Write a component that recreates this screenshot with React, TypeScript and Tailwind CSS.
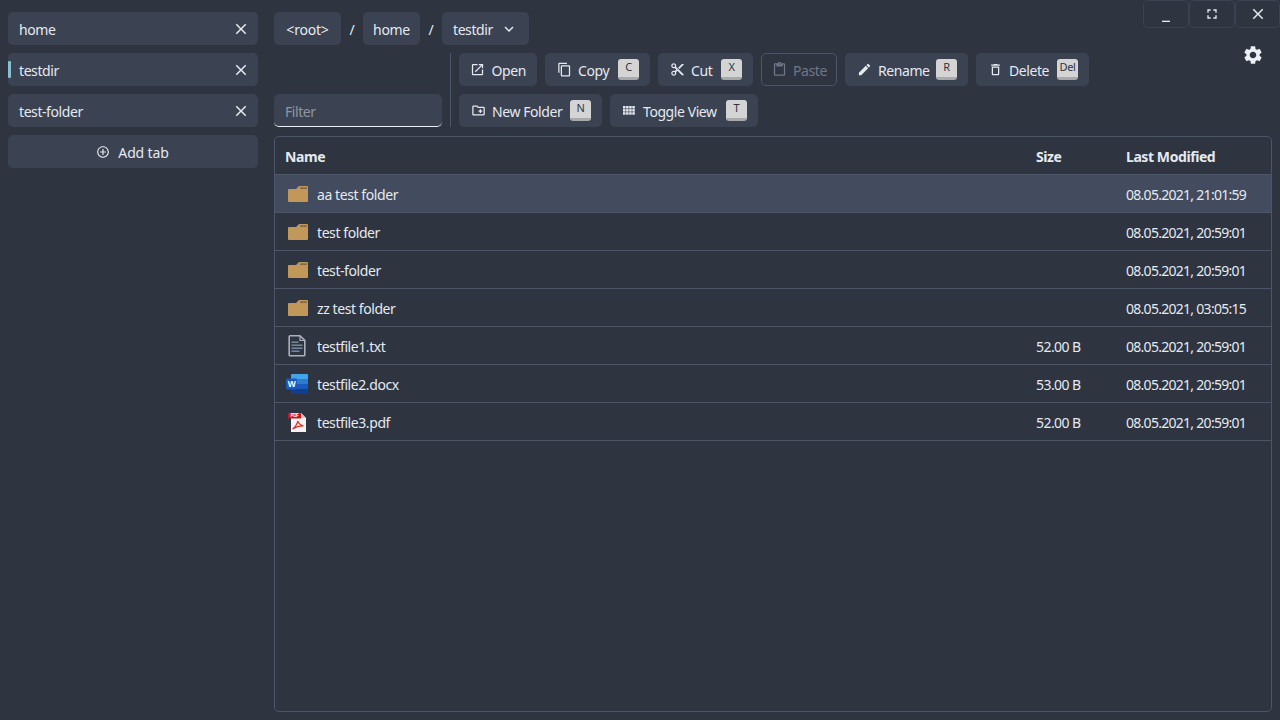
import React from "react";
import {
  MdOutlineOpenInNew, MdContentCopy, MdContentCut, MdContentPaste, MdEdit, MdOutlineDelete,
  MdOutlineCreateNewFolder, MdSettings, MdClose, MdFullscreen, MdMinimize,
  MdAddCircleOutline, MdExpandMore,
} from "react-icons/md";

function Folder() {
  return (
    <svg width="20" height="16" viewBox="0 0 20 16" className="ml-[1px]">
      <path d="M0 4 L0 15 Q0 16 1 16 L19 16 Q20 16 20 15 L20 1 Q20 0 19 0 L11 0 L8 3 L1 3 Q0 3 0 4Z" fill="#c1975a" />
      <rect x="12" y="1.6" width="7" height="1" fill="#5c4a32" />
    </svg>
  );
}

function TxtIcon() {
  return (
    <svg width="18" height="22" viewBox="0 0 18 22" className="ml-[1px]">
      <path d="M1.2 1.6 Q1.2 .8 2 .8 L12 .8 L16.8 5.4 L16.8 20 Q16.8 20.8 16 20.8 L2 20.8 Q1.2 20.8 1.2 20Z" fill="none" stroke="#aab0bb" strokeWidth="1.6" />
      <path d="M12 1 L12 5.5 L16.5 5.5" fill="none" stroke="#aab0bb" strokeWidth="1.2" />
      <rect x="3.5" y="6.5" width="7" height="1.4" fill="#7d8fa8" />
      <rect x="3.5" y="9.5" width="11" height="1.4" fill="#7d8fa8" />
      <rect x="3.5" y="12.5" width="11" height="1.4" fill="#7d8fa8" />
      <rect x="3.5" y="15.5" width="8" height="1.4" fill="#7d8fa8" />
    </svg>
  );
}

function WordIcon() {
  return (
    <svg width="22" height="20" viewBox="0 0 22 20" className="-ml-[1px]">
      <rect x="5" y="0" width="17" height="5.5" rx="1" fill="#41a5ee" />
      <rect x="5" y="5" width="17" height="5" fill="#2b7cd3" />
      <rect x="5" y="10" width="17" height="5" fill="#185abd" />
      <path d="M5 15 H22 V19 Q22 20 21 20 H6 Q5 20 5 19Z" fill="#103f91" />
      <rect x="0" y="4.5" width="11" height="11" rx="1" fill="#185abd" />
      <text x="5.5" y="13" textAnchor="middle" fontSize="8.5" fontWeight="700" fill="#fff" fontFamily="'Liberation Sans', sans-serif">W</text>
    </svg>
  );
}

function PdfIcon() {
  return (
    <svg width="20" height="20" viewBox="0 0 20 20">
      <path d="M4 1 L14 1 L19 6 L19 20 L4 20Z" fill="#f3f3f3" />
      <path d="M14 1 L14 6 L19 6Z" fill="#c9c9c9" />
      <rect x="1" y="1" width="13" height="5.5" rx=".5" fill="#d0141b" />
      <text x="7.5" y="5.4" textAnchor="middle" fontSize="4.6" fontWeight="700" fill="#fff" fontFamily="'Liberation Sans', sans-serif">PDF</text>
      <path d="M5.5 17 Q9 15 11 9 Q11 12 16.5 14 Q11.5 13.5 5.5 17Z" fill="none" stroke="#e02b20" strokeWidth="1.2" />
    </svg>
  );
}

function GridIcon() {
  return (
    <svg width="12" height="9" viewBox="0 0 12 9" fill="currentColor">
      {[0, 3.1, 6.2].map((y) =>
        [0, 3.1, 6.2, 9.3].map((x) => <rect key={x + "-" + y} x={x} y={y} width="2.5" height="2.5" />)
      )}
    </svg>
  );
}

function Key({ k }: { k: string }) {
  return (
    <span className="flex h-[21px] w-[21px] justify-center rounded-[3px] border-b-[3px] border-[#a9a9a9] bg-[#d4d4d4] text-[11px] leading-[15px] tracking-[-0.3px] text-[#2e3440]">
      {k}
    </span>
  );
}

function Btn({ icon, label, k, w, disabled }: { icon: React.ReactNode; label: string; k?: string; w: string; disabled?: boolean }) {
  return (
    <div
      className={
        "flex h-[33px] items-center rounded-[5px] pr-[11px] text-[14px] " + w + " " +
        (disabled ? "border border-[#4c566a] pl-[10px] text-[#6f7787]" : "bg-[#3b4252] pl-[11px] text-[#e5e9f0]")
      }
    >
      <span className="flex h-[16px] w-[16px] items-center justify-center text-[15px]">{icon}</span>
      <span className="ml-[6px] pt-[2px]">{label}</span>
      {k && <span className="ml-auto"><Key k={k} /></span>}
    </div>
  );
}

function Tab({ label, active }: { label: string; active?: boolean }) {
  return (
    <div className="relative flex h-[33px] items-center justify-between rounded-[5px] bg-[#3b4252] pl-[11px] pr-[8px] text-[14px] text-[#e5e9f0]">
      {active && <span className="absolute left-0 top-[8px] h-[17px] w-[3px] rounded-[1px] bg-[#88c0d0]" />}
      <span className="pt-[2px]">{label}</span>
      <MdClose className="text-[18px]" />
    </div>
  );
}

const rows: { name: string; icon: React.ReactNode; size: string; date: string; sel?: boolean }[] = [
  { name: "aa test folder", icon: <Folder />, size: "", date: "08.05.2021, 21:01:59", sel: true },
  { name: "test folder", icon: <Folder />, size: "", date: "08.05.2021, 20:59:01" },
  { name: "test-folder", icon: <Folder />, size: "", date: "08.05.2021, 20:59:01" },
  { name: "zz test folder", icon: <Folder />, size: "", date: "08.05.2021, 03:05:15" },
  { name: "testfile1.txt", icon: <TxtIcon />, size: "52.00 B", date: "08.05.2021, 20:59:01" },
  { name: "testfile2.docx", icon: <WordIcon />, size: "53.00 B", date: "08.05.2021, 20:59:01" },
  { name: "testfile3.pdf", icon: <PdfIcon />, size: "52.00 B", date: "08.05.2021, 20:59:01" },
];

export default function App() {
  return (
    <div className="relative flex h-screen w-screen overflow-hidden bg-[#2e3440] font-['Noto_Sans','Open_Sans',sans-serif] tracking-[-0.42px] text-[#e5e9f0]">
      <aside className="flex w-[274px] shrink-0 flex-col gap-2 pl-2 pr-4 pt-3">
        <Tab label="home" />
        <Tab label="testdir" active />
        <Tab label="test-folder" />
        <div className="flex h-[33px] items-center justify-center gap-[8px] rounded-[5px] bg-[#3b4252] pr-[1px] text-[14px]">
          <MdAddCircleOutline className="text-[14px]" />
          <span className="pt-[2px] tracking-[-0.15px]">Add tab</span>
        </div>
      </aside>

      <main className="flex min-w-0 flex-1 flex-col pr-2 pt-3">
        <nav className="flex h-[33px] items-center text-[14px]">
          <span className="flex h-[33px] w-[67px] items-center justify-center rounded-[5px] bg-[#3b4252] pt-[2px] tracking-[-0.2px]">&lt;root&gt;</span>
          <span className="w-[22px] pt-[2px] text-center">/</span>
          <span className="flex h-[33px] w-[57px] items-center justify-center rounded-[5px] bg-[#3b4252] pt-[2px] tracking-[-0.3px]">home</span>
          <span className="w-[22px] pt-[2px] text-center">/</span>
          <span className="flex h-[33px] w-[87px] items-center gap-[7px] rounded-[5px] bg-[#3b4252] pl-[11px]">
            <span className="pt-[2px]">testdir</span>
            <MdExpandMore className="text-[18px]" />
          </span>
        </nav>

        <section className="mt-2 flex h-[74px]">
          <div className="flex w-[168px] items-end">
            <div className="flex h-[33px] w-full items-center rounded-[5px] border-b border-[#eceff4] bg-[#3b4252] pl-[11px] pt-[2px] text-[14px] text-[#8f96a3]">
              Filter
            </div>
          </div>
          <div className="ml-2 mr-2 w-px bg-[#4c566a]" />
          <div className="flex flex-col gap-2">
            <div className="flex gap-2">
              <Btn icon={<MdOutlineOpenInNew />} label="Open" w="w-[78px]" />
              <Btn icon={<MdContentCopy />} label="Copy" k="C" w="w-[105px]" />
              <Btn icon={<MdContentCut />} label="Cut" k="X" w="w-[95px]" />
              <Btn icon={<MdContentPaste />} label="Paste" w="w-[76px]" disabled />
              <Btn icon={<MdEdit />} label="Rename" k="R" w="w-[123px]" />
              <Btn icon={<MdOutlineDelete />} label="Delete" k="Del" w="w-[113px]" />
            </div>
            <div className="flex gap-2">
              <Btn icon={<MdOutlineCreateNewFolder />} label="New Folder" k="N" w="w-[143px]" />
              <Btn icon={<GridIcon />} label="Toggle View" k="T" w="w-[148px]" />
            </div>
          </div>
        </section>

        <section className="mb-2 mt-[9px] flex-1 rounded-[5px] border border-[#4c566a]">
          <div className="grid h-[38px] grid-cols-[751px_90px_1fr] items-center border-b border-[#4c566a] pl-[10px] text-[14px] font-bold">
            <span className="pt-[2px]">Name</span>
            <span className="pt-[2px]">Size</span>
            <span className="pt-[2px]">Last Modified</span>
          </div>
          {rows.map((r) => (
            <div
              key={r.name}
              className={
                "grid h-[38px] grid-cols-[751px_90px_1fr] items-center border-b border-[#4c566a] pl-[10px] text-[14px] " +
                (r.sel ? "bg-[#434c5e]" : "")
              }
            >
              <span className="flex items-center">
                <span className="flex w-[32px] justify-start pl-[2px]">{r.icon}</span>
                <span className="pt-[2px]">{r.name}</span>
              </span>
              <span className="pt-[2px] tracking-[-0.55px]">{r.size}</span>
              <span className="pt-[2px] tracking-[-0.72px]">{r.date}</span>
            </div>
          ))}
        </section>
      </main>

      <div className="absolute right-0 top-0 flex">
        <span className="flex h-[28px] w-[46px] items-end justify-center rounded-[5px] border border-[#3b4252] text-[16px]"><MdMinimize className="mb-[3px]" /></span>
        <span className="flex h-[28px] w-[46px] items-center justify-center rounded-[5px] border border-[#3b4252] text-[16px]"><MdFullscreen /></span>
        <span className="flex h-[28px] w-[45px] items-center justify-center rounded-[5px] border border-[#3b4252] text-[18px]"><MdClose /></span>
      </div>
      <MdSettings className="absolute right-[16px] top-[44px] text-[22px] text-[#eceff4]" />
    </div>
  );
}
